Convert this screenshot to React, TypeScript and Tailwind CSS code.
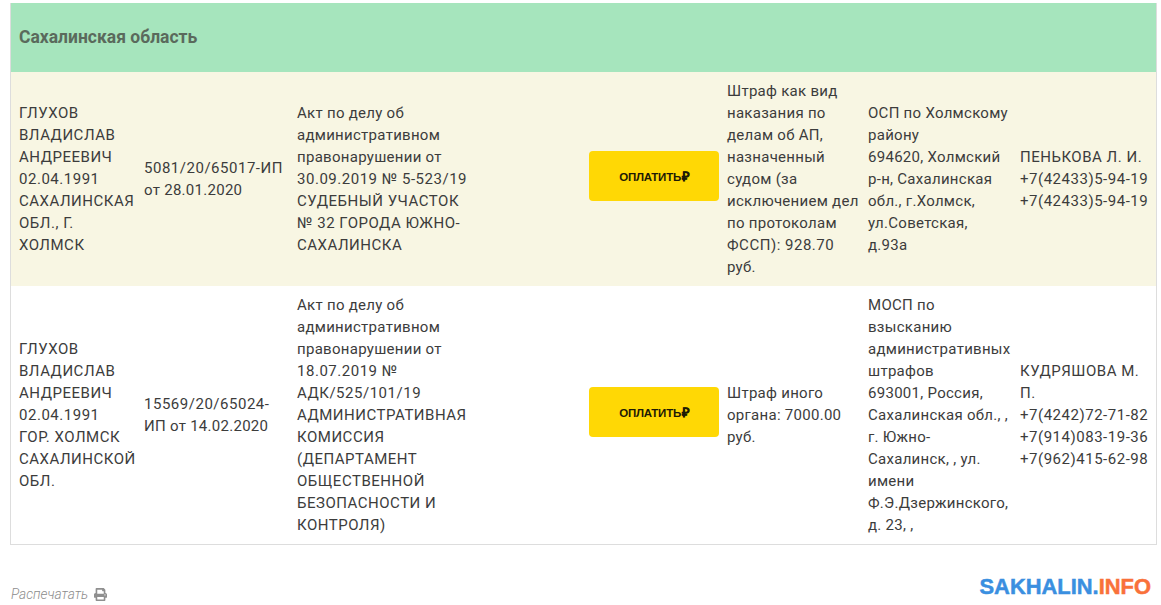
import React from 'react';
import { FaPrint } from 'react-icons/fa';

interface Row {
  debtor: string[];
  number: string[];
  act: string[];
  subject: string[];
  office: string[];
  bailiff: string[];
  bg: string;
}

const rows: Row[] = [
  {
    debtor: ['ГЛУХОВ', 'ВЛАДИСЛАВ', 'АНДРЕЕВИЧ', '02.04.1991', 'САХАЛИНСКАЯ', 'ОБЛ., Г.', 'ХОЛМСК'],
    number: ['5081/20/65017-ИП', 'от 28.01.2020'],
    act: ['Акт по делу об', 'административном', 'правонарушении от', '30.09.2019 № 5-523/19', 'СУДЕБНЫЙ УЧАСТОК', '№ 32 ГОРОДА ЮЖНО-', 'САХАЛИНСКА'],
    subject: ['Штраф как вид', 'наказания по', 'делам об АП,', 'назначенный', 'судом (за', 'исключением дел', 'по протоколам', 'ФССП): 928.70', 'руб.'],
    office: ['ОСП по Холмскому', 'району', '694620, Холмский', 'р-н, Сахалинская', 'обл., г.Холмск,', 'ул.Советская,', 'д.93а'],
    bailiff: ['ПЕНЬКОВА Л. И.', '+7(42433)5-94-19', '+7(42433)5-94-19'],
    bg: 'bg-[#f8f6e3]',
  },
  {
    debtor: ['ГЛУХОВ', 'ВЛАДИСЛАВ', 'АНДРЕЕВИЧ', '02.04.1991', 'ГОР. ХОЛМСК', 'САХАЛИНСКОЙ', 'ОБЛ.'],
    number: ['15569/20/65024-', 'ИП от 14.02.2020'],
    act: ['Акт по делу об', 'административном', 'правонарушении от', '18.07.2019 №', 'АДК/525/101/19', 'АДМИНИСТРАТИВНАЯ', 'КОМИССИЯ', '(ДЕПАРТАМЕНТ', 'ОБЩЕСТВЕННОЙ', 'БЕЗОПАСНОСТИ И', 'КОНТРОЛЯ)'],
    subject: ['Штраф иного', 'органа: 7000.00', 'руб.'],
    office: ['МОСП по', 'взысканию', 'административных', 'штрафов', '693001, Россия,', 'Сахалинская обл., ,', 'г. Южно-', 'Сахалинск, , ул.', 'имени', 'Ф.Э.Дзержинского,', 'д. 23, ,'],
    bailiff: ['КУДРЯШОВА М.', 'П.', '+7(4242)72-71-82', '+7(914)083-19-36', '+7(962)415-62-98'],
    bg: 'bg-white',
  },
];

function Lines({ items }: { items: string[] }) {
  return (
    <>
      {items.map((line, i) => (
        <div key={i} className={line === line.toUpperCase() ? 'whitespace-nowrap tracking-[0.52px]' : 'whitespace-nowrap tracking-[0.28px]'}>
          {line}
        </div>
      ))}
    </>
  );
}

export default function App() {
  return (
    <div className="h-[605px] w-[1161px] overflow-hidden bg-white font-['Roboto',sans-serif] text-[15px] leading-[22px] text-[#3c3c3c]">
      <div className="pl-[10px] pr-[4px] pt-[3px]">
        <div className="border-x border-b border-[#dddddd]">
          <div className="flex h-[69px] items-center bg-[#a6e5bd] px-2 pb-[1px] text-[17.5px] font-bold text-[#5a6a5c]">
            Сахалинская область
          </div>
          {rows.map((row, i) => (
            <div key={i} className={`grid grid-cols-[125px_153px_292px_138px_141px_152px_1fr] items-center py-2 ${row.bg}`}>
              <div className="px-2"><Lines items={row.debtor} /></div>
              <div className="px-2"><Lines items={row.number} /></div>
              <div className="px-2"><Lines items={row.act} /></div>
              <div className="px-2 pb-[6px]">
                <div className="flex h-[50px] w-[130px] items-center justify-center rounded-[4px] bg-[#ffd805] pl-px pt-[2px] font-['Liberation_Sans',sans-serif] text-[11.5px] font-bold tracking-[-0.25px] text-[#1d1a05]">
                  ОПЛАТИТЬ<span className="ml-px text-[13px] [-webkit-text-stroke:0.3px]">₽</span>
                </div>
              </div>
              <div className="px-2"><Lines items={row.subject} /></div>
              <div className="px-2"><Lines items={row.office} /></div>
              <div className="px-2"><Lines items={row.bailiff} /></div>
            </div>
          ))}
        </div>
        <div className="mt-[30px] flex items-start justify-between pl-px pr-[6px]">
          <div className="mt-[10px] flex items-center gap-[6px] text-[13.7px] font-light italic leading-[18px] text-[#8c8c8c]">
            Распечатать <FaPrint className="h-[13px] w-[13px] text-[#8f8f8f]" />
          </div>
          <div className="font-['Liberation_Sans',sans-serif] text-[21.9px] font-bold leading-[24px] [-webkit-text-stroke:0.5px]">
            <span className="text-[#3a8fe0]">SAKHALIN.</span>
            <span className="text-[#f9713a]">INFO</span>
          </div>
        </div>
      </div>
    </div>
  );
}
